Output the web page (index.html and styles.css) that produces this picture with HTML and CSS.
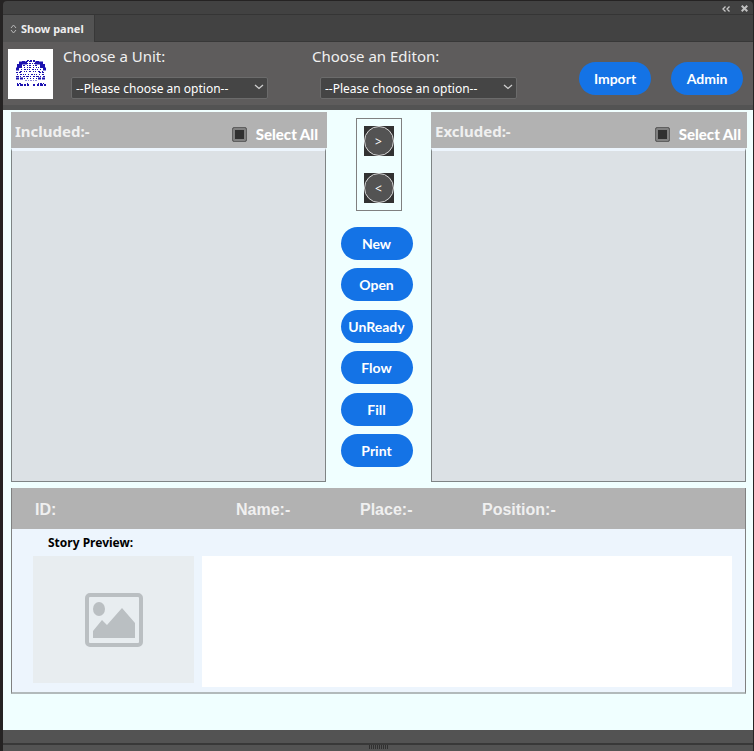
FILE: index.html
```html
<!DOCTYPE html>
<html lang="en">
<head>
<meta charset="utf-8">
<title>Show panel</title>
<link rel="stylesheet" href="styles.css">
</head>
<body>
<div class="window">
  <div class="titlebar">
    <button class="title-btn" aria-label="Collapse"><svg width="8" height="6" viewBox="0 0 8 6"><path d="M3.500 .5 1 3l2.500 2.500M7.500 .5 5 3l2.500 2.500" fill="none" stroke="#c8c8c8" stroke-width="1.300"/></svg></button>
    <button class="title-btn" aria-label="Close"><svg width="7" height="7" viewBox="0 0 7 7"><path d="M.7 .7l5.600 5.600M6.300 .7.7 6.300" stroke="#c0c0c0" stroke-width="2"/></svg></button>
  </div>
  <div class="tabs">
    <div class="tab"><svg width="7" height="10" viewBox="0 0 7 10"><path d="M1 4 3.500 1 6 4M1 6l2.500 3L6 6" fill="none" stroke="#b8b8b8"/></svg>Show panel</div>
  </div>
  <header class="toolbar">
    <svg class="logo" width="45" height="50" viewBox="0 0 45 50">
      <path fill="#fff" d="M0 0h45v50H0z"/>
      <g fill="none" stroke="#1c12b0">
        <path d="M19 11.500h8" stroke-dasharray="2 1"/>
        <path d="M14 12.500h18" stroke-dasharray="3 1 2 1"/>
        <path d="M11 14h8M27 14h8" stroke-width="3"/>
        <path d="M9 17h5M32 17h5" stroke-width="4"/>
        <path d="M8 20h3M35 20h3" stroke-width="3"/>
        <path d="M19 14.500h8" stroke-dasharray="1 1 2 1"/>
        <path d="M15 16.500h16" stroke-dasharray="2 2 1 1"/>
        <path d="M16 18.500h15" stroke-dasharray="1 2 1 1 2 2"/>
        <path d="M13 20.500h20" stroke-dasharray="1 2 2 1 1 1"/>
        <path d="M12 22.500h23" stroke-dasharray="2 2 1 1 1 2"/>
        <path d="M8 23.500h6M31 23.500h6" stroke-dasharray="2 1"/>
        <path d="M9 25.500h28" stroke-dasharray="1 2 2 1 1 1 1 2"/>
        <path d="M8 27.500h30" stroke-dasharray="3 1 1 2 2 1"/>
        <path d="M8 29.500h7M30 29.500h8" stroke-width="2" stroke-dasharray="3 1"/>
        <path d="M16 29.500h14" stroke-dasharray="1 2"/>
        <path d="M17 31.500h12" stroke-dasharray="2 1 1 1" opacity=".5"/>
        <path d="M9 34.500h4M19 34.500h2M30 34.500h7" stroke-dasharray="1 1 2 1"/>
        <path d="M9 36h12M25 36h2M29 36h9" stroke-width="2" stroke-dasharray="2 1 3 1"/>
      </g>
    </svg>
    <div class="field">
      <label for="unit">Choose a Unit:</label>
      <span class="select"><select id="unit"><option>--Please choose an option--</option></select><svg width="10" height="6" viewBox="0 0 10 6"><path d="M1 1l4 3.500L9 1" fill="none" stroke="#d0d0d0" stroke-width="1.300"/></svg></span>
    </div>
    <div class="field">
      <label for="edition">Choose an Editon:</label>
      <span class="select"><select id="edition"><option>--Please choose an option--</option></select><svg width="10" height="6" viewBox="0 0 10 6"><path d="M1 1l4 3.500L9 1" fill="none" stroke="#d0d0d0" stroke-width="1.300"/></svg></span>
    </div>
    <div class="actions">
      <button class="pill">Import</button>
      <button class="pill">Admin</button>
    </div>
  </header>
  <main class="content">
    <div class="lists">
      <section class="list">
        <div class="list-head"><h2>Included:-</h2><label class="check"><input type="checkbox">Select All</label></div>
        <div class="list-body"></div>
      </section>
      <div class="middle">
        <div class="movers">
          <span class="mover"><button>&gt;</button></span>
          <span class="mover"><button>&lt;</button></span>
        </div>
        <div class="commands">
          <button class="pill">New</button>
          <button class="pill">Open</button>
          <button class="pill">UnReady</button>
          <button class="pill">Flow</button>
          <button class="pill">Fill</button>
          <button class="pill">Print</button>
        </div>
      </div>
      <section class="list">
        <div class="list-head"><h2>Excluded:-</h2><label class="check"><input type="checkbox">Select All</label></div>
        <div class="list-body"></div>
      </section>
    </div>
    <section class="story">
      <div class="story-head"><span>ID:</span><span>Name:-</span><span>Place:-</span><span>Position:-</span></div>
      <h3>Story Preview:</h3>
      <div class="preview">
        <div class="thumb">
          <svg width="58" height="54" viewBox="0 0 58 54"><rect x="2" y="2" width="54" height="50" rx="3" fill="none" stroke="#babfc2" stroke-width="4"/><ellipse cx="14" cy="16" rx="6" ry="7" fill="#babfc2"/><path d="M8 45v-7l9-11 5 5 15-17 13 15v15z" fill="#babfc2"/></svg>
        </div>
        <div class="text"></div>
      </div>
    </section>
  </main>
  <footer class="statusbar"><span class="grip"></span></footer>
</div>
</body>
</html>
```

FILE: styles.css
```css
* { box-sizing: border-box; }
body {
  margin: 0;
  background: #252323;
  font-family: "Noto Sans", sans-serif;
}
button { border: 0; padding: 0; font-family: inherit; }
h2, h3 { margin: 0; }
.window {
  display: flex;
  flex-direction: column;
  min-height: 100vh;
  padding: 1px 1px 0 3px;
}
.titlebar {
  display: flex;
  justify-content: flex-end;
  align-items: center;
  gap: 11px;
  height: 14px;
  padding: 2px 5px 0 0;
  background: #424242;
  border-bottom: 1px solid #353535;
  border-radius: 4px 4px 0 0;
}
.title-btn { display: flex; background: none; }
.tabs {
  display: flex;
  height: 27px;
  background: #424242;
  border-bottom: 1px solid #383838;
}
.tab {
  display: flex;
  align-items: center;
  gap: 4px;
  height: 27px;
  padding: 0 10px 0 7px;
  background: #535353;
  border-right: 1px solid #383838;
  color: #eee;
  font-size: 11px;
  font-weight: 700;
}
.toolbar {
  display: flex;
  align-items: flex-start;
  height: 68px;
  padding: 0 10px 0 5px;
  background: #5e5c5c;
  border-bottom: 5px solid #535353;
}
.logo { flex: none; margin-top: 7px; }
.field {
  display: flex;
  flex-direction: column;
  width: 249px;
  padding: 2px 0 0 10px;
}
.field label {
  color: #f0f0f0;
  font-size: 15px;
  line-height: 24px;
}
.select {
  position: relative;
  width: 197px;
  margin: 9px 0 0 8px;
}
.select select {
  appearance: none;
  display: block;
  width: 100%;
  height: 22px;
  padding: 0 4px;
  border: 1px solid #6b6b6b;
  border-radius: 2px;
  background: #454545;
  color: #fff;
  font: 12px "Noto Sans", sans-serif;
}
.select svg { position: absolute; right: 4px; top: 7px; }
.actions {
  display: flex;
  gap: 20px;
  margin: 20px 0 0 auto;
}
.pill {
  flex: none;
  width: 72px;
  height: 33px;
  border-radius: 17px;
  background: #1473e6;
  color: #fff;
  font: 700 14px Lato, sans-serif;
}
.content {
  flex: 1;
  display: flex;
  flex-direction: column;
  gap: 6px;
  padding: 2px 7px 36px 8px;
  background: #f0ffff;
}
.lists {
  flex: 1;
  display: grid;
  grid-template-columns: 1fr 105px 1fr;
}
.list { display: flex; flex-direction: column; }
.list-head {
  display: flex;
  justify-content: space-between;
  height: 36px;
  padding: 0 9px 0 4px;
  margin-right: -1px;
  background: #b2b2b2;
  color: #fff;
}
.list:last-child .list-head { padding-right: 6px; }
.list-head h2 {
  color: #f0f0f0;
  font-size: 15px;
  line-height: 39px;
}
.check {
  display: flex;
  align-items: center;
  gap: 9px;
  padding-top: 8px;
  font: 900 15px Lato, sans-serif;
}
.check input {
  appearance: none;
  width: 15px;
  height: 15px;
  margin: 0;
  border: 1px solid #606060;
  border-radius: 2px;
  background: #303030;
  box-shadow: inset 0 0 0 2px #808080;
}
.list-body {
  flex: 1;
  border: 1px solid #7f8485;
  border-top: 3px solid #edf5fd;
  background: #dce1e5;
}
.middle {
  display: flex;
  flex-direction: column;
  align-items: center;
  gap: 16px;
  padding: 6px 4px 15px 0;
}
.movers {
  display: flex;
  flex-direction: column;
  gap: 17px;
  margin-left: 4px;
  padding: 7px;
  border: 1px solid #808080;
}
.commands {
  flex: 1;
  display: flex;
  flex-direction: column;
  justify-content: space-between;
  gap: 8px;
}
.mover { background: #323232; }
.mover button {
  display: block;
  width: 30px;
  height: 30px;
  border: 1px solid #d8d8d8;
  border-radius: 50%;
  background: #535353;
  color: #fff;
  font-size: 12px;
}
.story {
  height: 206px;
  border: 1px solid #808080;
  border-bottom: 2px solid #b2babb;
  border-top: 0;
  background: #edf5fd;
}
.story-head {
  display: grid;
  grid-template-columns: 201px 124px 122px 1fr;
  height: 41px;
  padding-left: 23px;
  background: #b2b2b2;
  color: #f0f0f0;
  font: 700 16px/43px "Liberation Sans", sans-serif;
}
.story h3 {
  padding-left: 36px;
  font-size: 12px;
  line-height: 27px;
}
.preview {
  display: flex;
  align-items: flex-start;
  gap: 8px;
  padding: 0 13px 0 21px;
}
.thumb {
  display: flex;
  align-items: center;
  justify-content: center;
  width: 161px;
  height: 127px;
  background: #e8edf0;
}
.text { flex: 1; height: 131px; background: #fff; }
.statusbar {
  display: flex;
  justify-content: center;
  align-items: flex-end;
  height: 21px;
  background: linear-gradient(#535353 13px, #383838 13px, #383838 15px, #535353 15px);
}
.grip {
  width: 19px;
  height: 4px;
  margin-bottom: 2px;
  background: repeating-linear-gradient(90deg, #303030 0 1px, #535353 1px 2px);
}
```
